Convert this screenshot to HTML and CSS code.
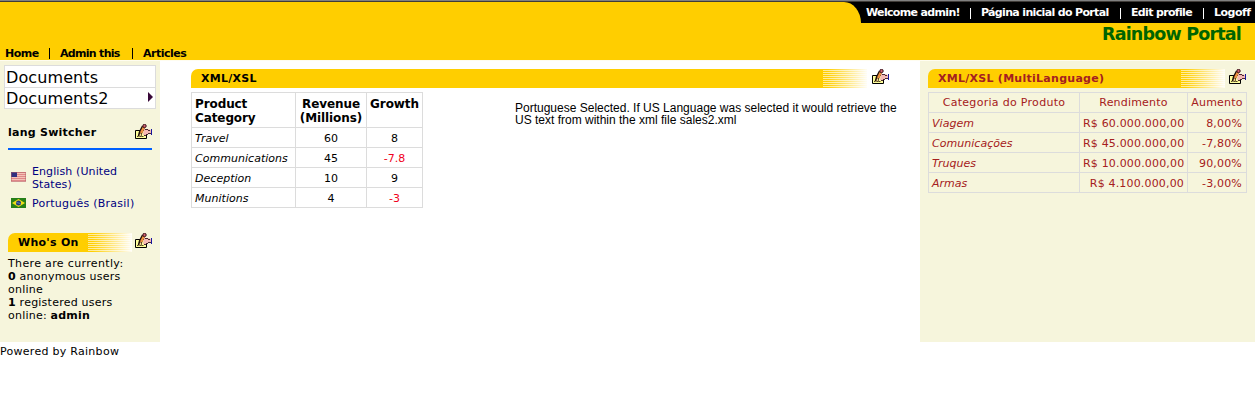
FILE: index.html
```html
<!DOCTYPE html>
<html lang="pt-BR">
<head>
<meta charset="utf-8">
<title>Rainbow Portal</title>
<link rel="stylesheet" href="styles.css">
</head>
<body>
<svg class="defs" width="0" height="0">
  <symbol id="edit" viewBox="0 0 18 16">
    <path d="M.5 6.500h11v8h-11z" fill="#ffff9c" stroke="#000"/>
    <path d="M9 5h4l3 1v4h-3l-1 1H8z" fill="#f4b8b4"/>
    <path d="M10 5.500h3M13 6.500h2M11 10.500h2M13 9.500h3M9 11.500h2" stroke="#4a2830"/>
    <path d="M16.500 5v6" stroke="#1818a0"/>
    <path d="M8.500 2.500 5.500 8.500 4.500 12.500" fill="none" stroke="#201008" stroke-width="3.600"/>
    <path d="M9 3 6 9" stroke="#f09040" stroke-width="2.400"/>
    <path d="M5.800 9.500 5 12" stroke="#ffdc90" stroke-width="1.400"/>
    <circle cx="9.500" cy="2" r="1.700" fill="#d06070" stroke="#381018"/>
    <path d="M2 12.500h1.500M6.500 12.500h2" stroke="#5a4a20"/>
  </symbol>
</svg>
<header class="header">
  <div class="topbar">
    <div class="curve"></div>
    <nav class="userlinks"><a class="u1">Welcome admin!</a><i></i><a class="u2">Página inicial do Portal</a><i></i><a class="u3">Edit profile</a><i></i><a class="u4">Logoff</a></nav>
  </div>
  <h1 class="brand">Rainbow Portal</h1>
  <nav class="tabs"><a class="t1">Home</a><i></i><a class="t2">Admin this</a><i></i><a class="t3">Articles</a></nav>
</header>
<main class="columns">
  <aside class="left">
    <ul class="menu"><li>Documents</li><li>Documents2<b class="arrow"></b></li></ul>
    <div class="langhead"><span>lang Switcher</span><svg class="edit"><use href="#edit"/></svg></div>
    <div class="langs">
      <div class="lang us">
        <svg width="15" height="10" shape-rendering="crispEdges"><path fill="#f3c4b8" d="M0 0h15v10H0z"/><path stroke="#e08888" d="M0 .5h15M0 2.500h15M0 4.500h15M0 6.500h15M0 8.500h15"/><path fill="#303080" d="M0 0h6v5H0z"/><path fill="none" stroke="#b06068" d="M.5.5h14v9H.5z" opacity=".5"/></svg>
        <span>English (United<br>States)</span>
      </div>
      <div class="lang br">
        <svg width="15" height="10"><path fill="#268018" d="M0 0h15v10H0z"/><path fill="#f0dc18" d="M7.500 1 14 5 7.500 9 1 5z"/><circle cx="7.500" cy="5" r="2.500" fill="#203c80"/><path d="M5.500 4.500 9.500 5.500" stroke="#68a"/></svg>
        <span>Português (Brasil)</span>
      </div>
    </div>
    <div class="modhead who"><h2>Who's On</h2><svg class="edit"><use href="#edit"/></svg></div>
    <p class="online"><span>There are currently:</span><br><b>0</b> anonymous users<br>online<br><b>1</b> registered users<br>online: <b>admin</b></p>
  </aside>
  <section class="center">
    <div class="modhead"><h2>XML/XSL</h2><svg class="edit"><use href="#edit"/></svg></div>
    <div class="content">
      <table class="sales">
        <colgroup><col class="c1"><col class="c2"><col class="c3"></colgroup>
        <tr><th>Product<br>Category</th><th>Revenue<br>(Millions)</th><th>Growth</th></tr>
        <tr><td>Travel</td><td>60</td><td>8</td></tr>
        <tr><td>Communications</td><td>45</td><td class="neg">-7.8</td></tr>
        <tr><td>Deception</td><td>10</td><td>9</td></tr>
        <tr><td>Munitions</td><td>4</td><td class="neg">-3</td></tr>
      </table>
      <p class="note"><span>Portuguese Selected. If US Language was selected it would retrieve the</span><br>US text from within the xml file sales2.xml</p>
    </div>
  </section>
  <aside class="right">
    <div class="modhead"><h2>XML/XSL (MultiLanguage)</h2><svg class="edit"><use href="#edit"/></svg></div>
    <table class="vendas">
      <colgroup><col class="c1"><col class="c2"><col class="c3"></colgroup>
      <tr><th class="cat">Categoria do Produto</th><th>Rendimento</th><th>Aumento</th></tr>
      <tr><td>Viagem</td><td>R$ 60.000.000,00</td><td>8,00%</td></tr>
      <tr><td>Comunicações</td><td>R$ 45.000.000,00</td><td>-7,80%</td></tr>
      <tr><td>Truques</td><td>R$ 10.000.000,00</td><td>90,00%</td></tr>
      <tr><td>Armas</td><td>R$ 4.100.000,00</td><td>-3,00%</td></tr>
    </table>
  </aside>
</main>
<footer class="footer">Powered by Rainbow</footer>
</body>
</html>
```

FILE: styles.css
```css
* { box-sizing: border-box; }
body { margin: 0; height: 418px; overflow: hidden; background: #fff; color: #000; font: 11px/13px Verdana, "DejaVu Sans", sans-serif; }
h1, h2, p, ul { margin: 0; padding: 0; }
.defs { position: absolute; }
.header { height: 61px; background: #ffce00; border-top: 1px solid #808080; border-bottom: 1px solid #fffdf0; }
.topbar { display: flex; height: 22px; background: #000; border-top: 1px solid #403c38; }
.curve { flex: none; width: 861px; background: #ffce00; border-top-right-radius: 17px 21px; }
.userlinks, .tabs { display: flex; align-items: center; white-space: nowrap; font-weight: bold; }
.userlinks { padding-left: 5px; color: #fff; }
.userlinks i, .tabs i { width: 1px; height: 11px; margin: 0 10px; background: currentColor; }
.userlinks i { margin-top: 1px; }
.userlinks a { flex: none; letter-spacing: -.66px; }
.tabs a { flex: none; letter-spacing: -.5px; }
.userlinks .u4 { letter-spacing: -.5px; }
.u1 { width: 94px; } .u2 { width: 129px; } .u3 { width: 62px; }
.brand { height: 21px; padding: 1px 14px 0 0; text-align: right; color: #006400; font-size: 17.5px; line-height: 21px; letter-spacing: -.8px; }
.tabs { height: 17px; padding: 1px 0 0 5px; }
.t1 { width: 34px; } .t2 { width: 62px; }
.tabs .t2 { letter-spacing: -.7px; }
.columns { display: flex; height: 281px; }
.left { width: 160px; padding: 4px 4px 0; background: #f6f5dc; }
.center { width: 760px; padding: 7px 30px 0 31px; }
.right { width: 335px; padding: 7px 8px 0; background: #f6f5dc; color: #a52020; }
.menu { width: 152px; border: 1px solid #dcdcdc; background: #fff; list-style: none; font-size: 16px; line-height: 21px; letter-spacing: .1px; }
.menu li { display: flex; justify-content: space-between; align-items: center; height: 21px; padding: 1px 1px 0; }
.menu li + li { border-top: 1px solid #dcdcdc; padding-top: 0; }
.arrow { border-left: 5px solid #380838; border-top: 5px solid transparent; border-bottom: 5px solid transparent; margin: 0 1px 2px 0; }
.edit { flex: none; width: 18px; height: 16px; }
.langhead { display: flex; justify-content: space-between; height: 41px; margin: 0 3px 0 4px; padding-top: 15px; border-bottom: 2px solid #0060ff; font-weight: bold; letter-spacing: .25px; }
.langhead { margin-right: 4px; }
.langhead span { padding-top: 2px; }
.left .edit { margin-right: -1px; }
.langs { padding: 15px 7px 0; color: #000080; letter-spacing: .1px; }
.lang { display: flex; gap: 6px; align-items: center; }
.lang svg { margin-bottom: 2px; }
.br { margin-top: 6px; letter-spacing: .25px; }
.modhead { display: flex; justify-content: space-between; height: 20px; }
.modhead .edit { margin-top: 1px; }
.modhead h2 { flex: 1; height: 19px; margin: 1px 4px 0 0; padding: 3px 10px 0; font-size: 11px; line-height: 14px; letter-spacing: .27px; border-top-left-radius: 7px;
  background: repeating-linear-gradient(transparent 0 1px, rgba(255,255,255,.6) 1px 2px) right / 44px 100% no-repeat, linear-gradient(to left, #fffdf4, #ffce00 40px); }
.center .edit { margin-right: -1px; }
.center h2 { margin-right: 5px; }
.center .modhead { margin-right: 1px; }
.right .edit { margin-right: 0; }
.who { margin: 22px 4px 0; }
.modhead.who h2 { margin-right: 3px; }
.online { margin: 5px 4px 0; letter-spacing: .23px; }
.online span { letter-spacing: .35px; }
.content { display: flex; align-items: flex-start; padding-top: 4px; }
table { border-collapse: collapse; table-layout: fixed; }
td, th { border: 1px solid #dcdcdc; padding: 1px 3px 0; height: 20px; line-height: 13px; white-space: nowrap; }
.sales { width: 232px; }
.sales td { text-align: center; }
.sales th { height: 35px; padding-bottom: 0; font-size: 12px; line-height: 14px; vertical-align: top; padding-top: 4px; letter-spacing: -.1px; }
.sales th:first-child { text-align: left; }
.sales .c1 { width: 104px; } .sales .c2 { width: 71px; } .sales .c3 { width: 56px; }
.neg { color: #f00020; }
.note { margin: 10px 0 0 92px; font: 12px/12px Arial, "Liberation Sans", sans-serif; white-space: nowrap; }
.vendas { width: 319px; margin-top: 4px; }
.vendas th { padding: 0 3px; font-weight: normal; letter-spacing: .2px; }
.vendas .cat { letter-spacing: .3px; }
.vendas td { text-align: right; letter-spacing: .17px; }
.vendas td:last-child { padding-right: 4px; }
.sales td:first-child, .vendas td:first-child { padding-left: 3px; font-style: italic; text-align: left; letter-spacing: .03px; }
.vendas .c1 { width: 151px; } .vendas .c2 { width: 108px; } .vendas .c3 { width: 59px; }
.footer { padding-top: 3px; letter-spacing: .28px; }
```
